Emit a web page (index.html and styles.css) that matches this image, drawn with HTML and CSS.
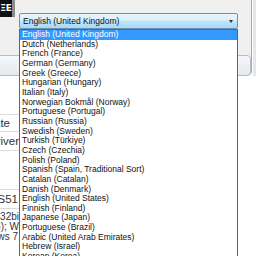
FILE: index.html
```html
<!DOCTYPE html>
<html>
<head>
  <meta charset="UTF-8">
  <title>Language Options</title>
  <link rel="stylesheet" href="styles.css">
</head>
<body>

  <!-- page behind the dialog, only its right edge shows -->
  <div class="page">
    <div class="page-row r1"><span>Update</span></div>
    <div class="page-row r2"><span>Device driver</span></div>
    <div class="page-row r3"></div>
    <div class="page-row r4"><span>Windows ES51</span></div>
    <div class="page-cell">
      <div class="cell-line"><span>Windows 32bi</span></div>
      <div class="cell-line"><span>Windows (x86); W</span></div>
      <div class="cell-line pad"><span>Windows 7</span></div>
    </div>
  </div>

  <!-- dialog -->
  <div class="dialog">
    <div class="dialog-top">
      <div class="app-icon">ΞE</div>
      <div class="icon-edge"></div>
    </div>
    <div class="panel"></div>
    <div class="side-strip"></div>
  </div>

  <!-- language combo with open list -->
  <div class="combo">
    <div class="combo-box">
      <span>English (United Kingdom)</span>
      <span class="arrow"></span>
    </div>
    <ul class="combo-list">
      <li class="selected">English (United Kingdom)</li>
      <li>Dutch (Netherlands)</li>
      <li>French (France)</li>
      <li>German (Germany)</li>
      <li>Greek (Greece)</li>
      <li>Hungarian (Hungary)</li>
      <li>Italian (Italy)</li>
      <li>Norwegian Bokmål (Norway)</li>
      <li>Portuguese (Portugal)</li>
      <li>Russian (Russia)</li>
      <li>Swedish (Sweden)</li>
      <li>Turkish (Türkiye)</li>
      <li>Czech (Czechia)</li>
      <li>Polish (Poland)</li>
      <li>Spanish (Spain, Traditional Sort)</li>
      <li>Catalan (Catalan)</li>
      <li>Danish (Denmark)</li>
      <li>English (United States)</li>
      <li>Finnish (Finland)</li>
      <li>Japanese (Japan)</li>
      <li>Portuguese (Brazil)</li>
      <li>Arabic (United Arab Emirates)</li>
      <li>Hebrew (Israel)</li>
      <li>Korean (Korea)</li>
    </ul>
  </div>

</body>
</html>
```

FILE: styles.css
```css
body {
  margin: 0;
  width: 256px;
  height: 256px;
  overflow: hidden;
  position: relative;
  background: #fff;
  font-family: "Liberation Sans", Arial, sans-serif;
  font-size: 8.5px;
  color: #111;
}

/* background page */
.page {
  position: absolute;
  left: 0;
  top: 76px;
  width: 19px;
  height: 180px;
  overflow: hidden;
  font-size: 11.5px;
  color: #333;
}
.page-row {
  display: flex;
  justify-content: flex-end;
  align-items: center;
  white-space: nowrap;
  border-bottom: 1px solid #dcdcdc;
}
.r1 { margin-top: 38px; border-top: 1px solid #dcdcdc; height: 16px; padding-right: 9px; }
.r2 { height: 18px; }
.r3 { height: 38px; }
.r4 { height: 18px; padding-right: 1px; }
.page-cell {
  padding-top: 3px;
}
.cell-line {
  display: flex;
  justify-content: flex-end;
  white-space: nowrap;
  height: 10px;
  line-height: 10px;
  font-size: 10px;
}
.cell-line.pad { padding-right: 1px; }

/* dialog */
.dialog {
  position: absolute;
  left: 0;
  top: 0;
  width: 256px;
  height: 76px;
}
.dialog-top {
  position: absolute;
  left: 0;
  top: 0;
  width: 251px;
  height: 75px;
  background: #f0f0f0;
  border-bottom-right-radius: 5px;
  border-right: 1px solid #a9a9a9;
  border-bottom: 1px solid #c9c9c9;
  display: flex;
}
.app-icon {
  width: 12px;
  height: 17px;
  background: #111;
  color: #fff;
  font-family: "DejaVu Sans", sans-serif;
  font-weight: bold;
  font-size: 9px;
  line-height: 17px;
  text-align: right;
  white-space: nowrap;
  overflow: hidden;
  direction: rtl;
}
.icon-edge {
  width: 3px;
  height: 17px;
  background: #8c8c8c;
}
.panel {
  position: absolute;
  left: -8px;
  top: 55px;
  width: 257px;
  height: 19px;
  border: 1px solid #b4bcc6;
  border-radius: 4px;
  background: linear-gradient(#f6f8fa, #e3e9ef);
}
.side-strip {
  position: absolute;
  left: 253px;
  top: 0;
  width: 3px;
  height: 76px;
  background: #e6e6e6;
}

/* combo box */
.combo {
  position: absolute;
  left: 19px;
  top: 13px;
  width: 219px;
}
.combo-box {
  height: 14px;
  border: 1px solid #6f8fae;
  border-radius: 2px;
  background: linear-gradient(#eaf6fd 0%, #d9f0fc 45%, #bee6fd 50%, #a7d9f5 100%);
  display: flex;
  align-items: center;
  justify-content: space-between;
  padding: 0 4px 0 3px;
  line-height: 14px;
}
.arrow {
  width: 0;
  height: 0;
  border-left: 2.5px solid transparent;
  border-right: 2.5px solid transparent;
  border-top: 3px solid #333;
}
.combo-list {
  list-style: none;
  margin: 0;
  padding: 0;
  background: #fff;
  border: 1px solid #646464;
  height: 240px;
  overflow: hidden;
}
.combo-list li {
  height: 9.67px;
  line-height: 9.67px;
  padding-left: 2px;
  white-space: nowrap;
}
.combo-list li.selected {
  background: #3399ff;
  color: #fff;
}
```
